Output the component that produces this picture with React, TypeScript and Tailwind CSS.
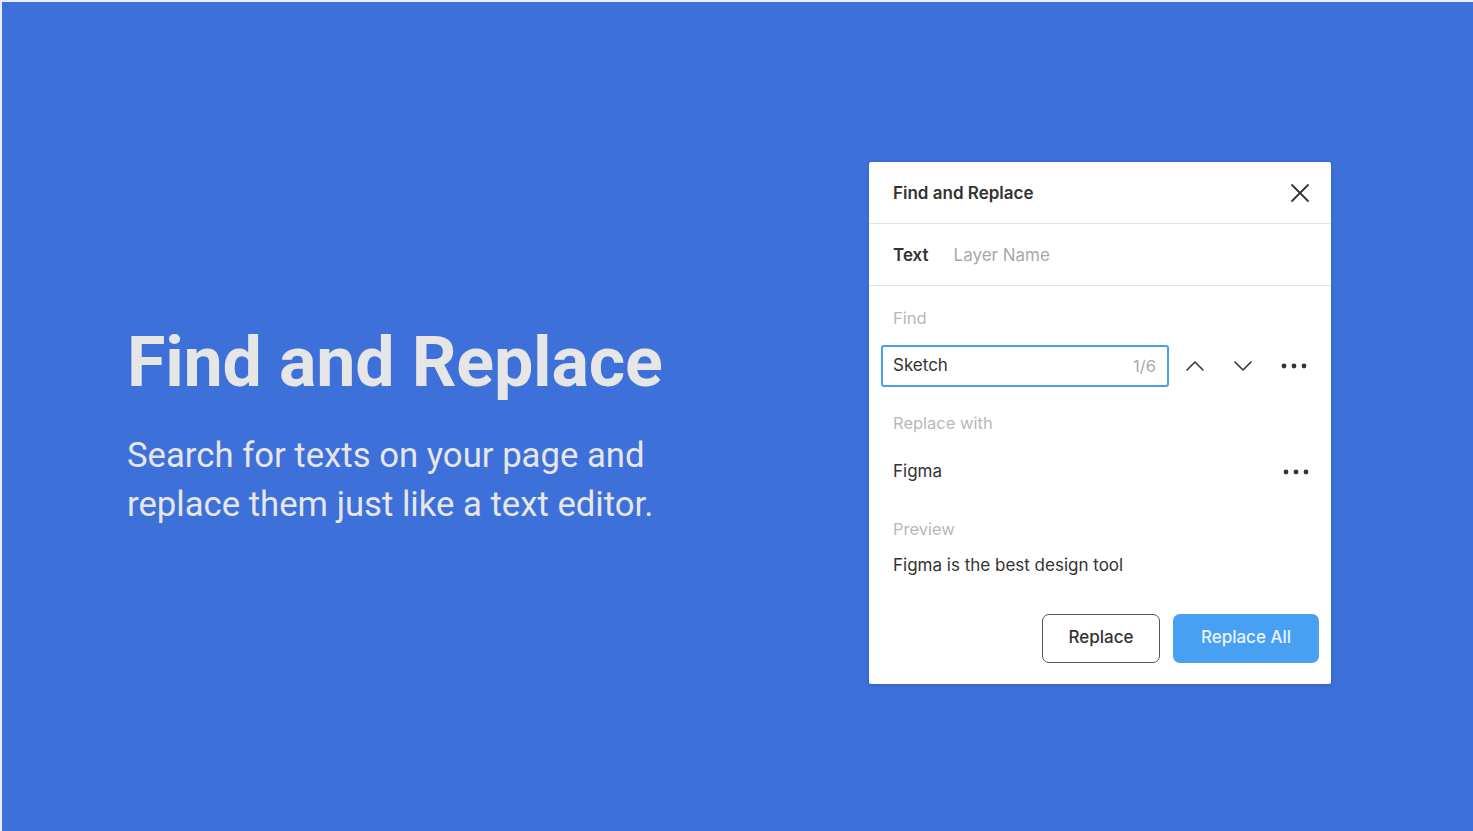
import React from 'react';

const Chevron = ({ up }: { up?: boolean }) => (
  <svg width="20" height="12" viewBox="0 0 20 12" fill="none" stroke="#333" strokeWidth="1.6" strokeLinecap="round" strokeLinejoin="round">
    {up ? <path d="M2 10 L10 2 L18 10" /> : <path d="M2 2 L10 10 L18 2" />}
  </svg>
);

const Dots = () => (
  <svg width="26" height="6" viewBox="0 0 26 6" fill="#333">
    <circle cx="3" cy="3" r="2.4" />
    <circle cx="13" cy="3" r="2.4" />
    <circle cx="23" cy="3" r="2.4" />
  </svg>
);

const App: React.FC = () => {
  return (
    <div className="w-[1473px] h-[831px] bg-[#3d70d9] flex items-start border-l-2 border-t-2 border-[#e9eef8]">
      <div className="w-[867px] pl-[125px] pt-[318px] font-['Roboto',sans-serif] text-[#e6e6e6]">
        <h1 className="text-[70px] font-bold leading-[84px] tracking-[-0.2px]">Find and Replace</h1>
        <p className="mt-[27px] text-[34.7px] leading-[49px] font-normal">
          Search for texts on your page and
          <br />
          replace them just like a text editor.
        </p>
      </div>

      <div className="mt-[160px] w-[462px] h-[522px] bg-white rounded-[2px] shadow-[0_1px_4px_rgba(0,0,0,0.15)] font-['Inter',sans-serif] text-[#333]">
        <div className="h-[62px] flex items-center justify-between pl-[24px] pr-[20px] pt-[2px] border-b border-[#e3e3e3]">
          <span className="text-[17px] font-semibold">Find and Replace</span>
          <svg width="22" height="22" viewBox="0 0 22 22" stroke="#333" strokeWidth="1.8" strokeLinecap="round" className="-mt-[2px]">
            <path d="M3 3 L19 19 M19 3 L3 19" />
          </svg>
        </div>
        <div className="h-[62px] flex items-center gap-[25px] px-[24px] pt-[2px] border-b border-[#e3e3e3] text-[17px]">
          <span className="font-semibold">Text</span>
          <span className="text-[#a9a9a9]">Layer Name</span>
        </div>

        <div className="px-[24px] pt-[20px]">
          <div className="text-[16.5px] text-[#b8b8b8] leading-[24px]">Find</div>
          <div className="mt-[15px] flex items-center">
            <div className="-ml-[12px] w-[289px] h-[42px] border-2 border-[#4a9ff0] rounded-[3px] flex items-center justify-between pl-[10px] pr-[11px]">
              <span className="text-[17px]">Sketch</span>
              <span className="text-[16.5px] text-[#a9a9a9]">1/6</span>
            </div>
            <div className="ml-[16px] flex items-center gap-[28px]">
              <Chevron up />
              <Chevron />
            </div>
            <div className="ml-[28px]">
              <Dots />
            </div>
          </div>

          <div className="mt-[24px] text-[16.5px] text-[#b8b8b8] leading-[24px]">Replace with</div>
          <div className="mt-[24px] flex items-center justify-between -mr-[2px]">
            <span className="text-[17px]">Figma</span>
            <Dots />
          </div>

          <div className="mt-[32px] text-[16.5px] text-[#b8b8b8] leading-[24px]">Preview</div>
          <div className="mt-[12px] text-[17px] leading-[24px]">Figma is the best design tool</div>

          <div className="mt-[37px] flex justify-end gap-[13px] -mr-[12px]">
            <button className="w-[118px] h-[49px] rounded-[7px] border-[1.5px] border-[#555] text-[17px] font-medium text-[#333]">
              Replace
            </button>
            <button className="w-[146px] h-[49px] rounded-[7px] bg-[#48a0f2] text-[17px] font-medium text-[#eaf4ff]">
              Replace All
            </button>
          </div>
        </div>
      </div>
    </div>
  );
};

export default App;
